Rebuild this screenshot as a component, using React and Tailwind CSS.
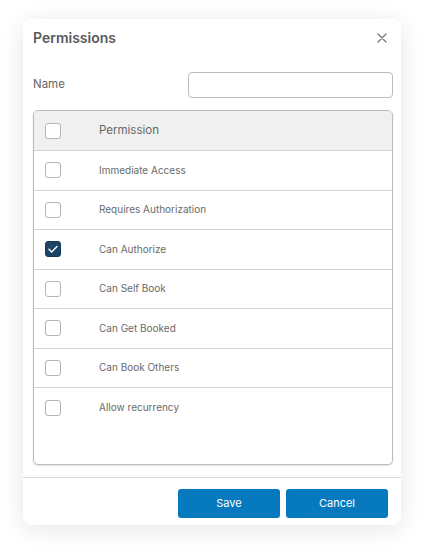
import { useState } from 'react';

const permissions = [
    { name: 'Immediate Access', checked: false },
    { name: 'Requires Authorization', checked: false },
    { name: 'Can Authorize', checked: true },
    { name: 'Can Self Book', checked: false },
    { name: 'Can Get Booked', checked: false },
    { name: 'Can Book Others', checked: false },
    { name: 'Allow recurrency', checked: false },
];

const Box = ({ checked, onClick }) => (
    <button
        type="button"
        onClick={onClick}
        className={
            checked
                ? 'w-4 h-4 rounded-[3px] bg-[#1c4467] border border-[#15385a] flex items-center justify-center'
                : 'w-4 h-4 rounded-[3px] bg-white border border-[#b5b5b5]'
        }
    >
        {checked && (
            <svg width="12" height="12" viewBox="0 0 12 12" fill="none">
                <path d="M2 6.3l2.6 2.6L10 3.5" stroke="white" strokeWidth="1.4" strokeLinecap="round" strokeLinejoin="round" />
            </svg>
        )}
    </button>
);

const App = () => {
    const [rows, setRows] = useState(permissions);

    const toggle = (i) => {
        setRows(rows.map((r, j) => (j === i ? { ...r, checked: !r.checked } : r)));
    };

    return (
        <div className="min-h-screen bg-white pt-[19px] pl-[23px]" style={{ fontFamily: 'Inter, "Noto Sans", sans-serif' }}>
            <div className="w-[378px] bg-white rounded-lg shadow-[0_4px_24px_rgba(0,0,0,0.10)]">
                <div className="h-[37px] pl-[10px] pr-[14px] flex items-center justify-between">
                    <h2 className="text-[14px] font-semibold text-[#595959]">Permissions</h2>
                    <button type="button" className="text-[#777]">
                        <svg width="10" height="10" viewBox="0 0 10 10">
                            <path d="M1 1l8 8M9 1l-8 8" stroke="currentColor" strokeWidth="1.3" strokeLinecap="round" />
                        </svg>
                    </button>
                </div>

                <div className="pl-[10px] pr-[8px]">
                    <div className="mt-[16px] flex items-center justify-between">
                        <label className="text-[11.5px] text-[#666]">Name</label>
                        <input className="w-[205px] h-[26px] border border-[#bdbdbd] rounded-[4px] px-2 text-[12px] outline-none" />
                    </div>

                    <div className="mt-[12px] h-[355px] border border-[#bcbcbc] rounded-[5px] shadow-[0_1px_2px_rgba(0,0,0,0.12)] overflow-hidden">
                        <div className="h-[40px] bg-[#f0f0f0] border-b border-[#d4d4d4] flex items-center">
                            <div className="pl-[11px] w-[65px] flex items-center">
                                <Box checked={false} />
                            </div>
                            <span className="text-[11.5px] text-[#666]">Permission</span>
                        </div>
                        {rows.map((r, i) => (
                            <div
                                key={r.name}
                                className={
                                    i < rows.length - 1
                                        ? 'h-[39.5px] border-b border-[#d4d4d4] flex items-center'
                                        : 'h-[39.5px] flex items-center'
                                }
                            >
                                <div className="pl-[11px] w-[65px] flex items-center">
                                    <Box checked={r.checked} onClick={() => toggle(i)} />
                                </div>
                                <span className="text-[10px] text-[#6a6a6a]">{r.name}</span>
                            </div>
                        ))}
                    </div>
                </div>

                <div className="mt-[12px] border-t border-[#d8d8d8] pt-[11px] pb-[7px] pr-[13px] flex justify-end gap-[6px]">
                    <button type="button" className="w-[102px] h-[29px] rounded-[3px] bg-[#0679bf] text-white text-[11px]">
                        Save
                    </button>
                    <button type="button" className="w-[102px] h-[29px] rounded-[3px] bg-[#0679bf] text-white text-[11px]">
                        Cancel
                    </button>
                </div>
            </div>
        </div>
    );
};

export default App;
